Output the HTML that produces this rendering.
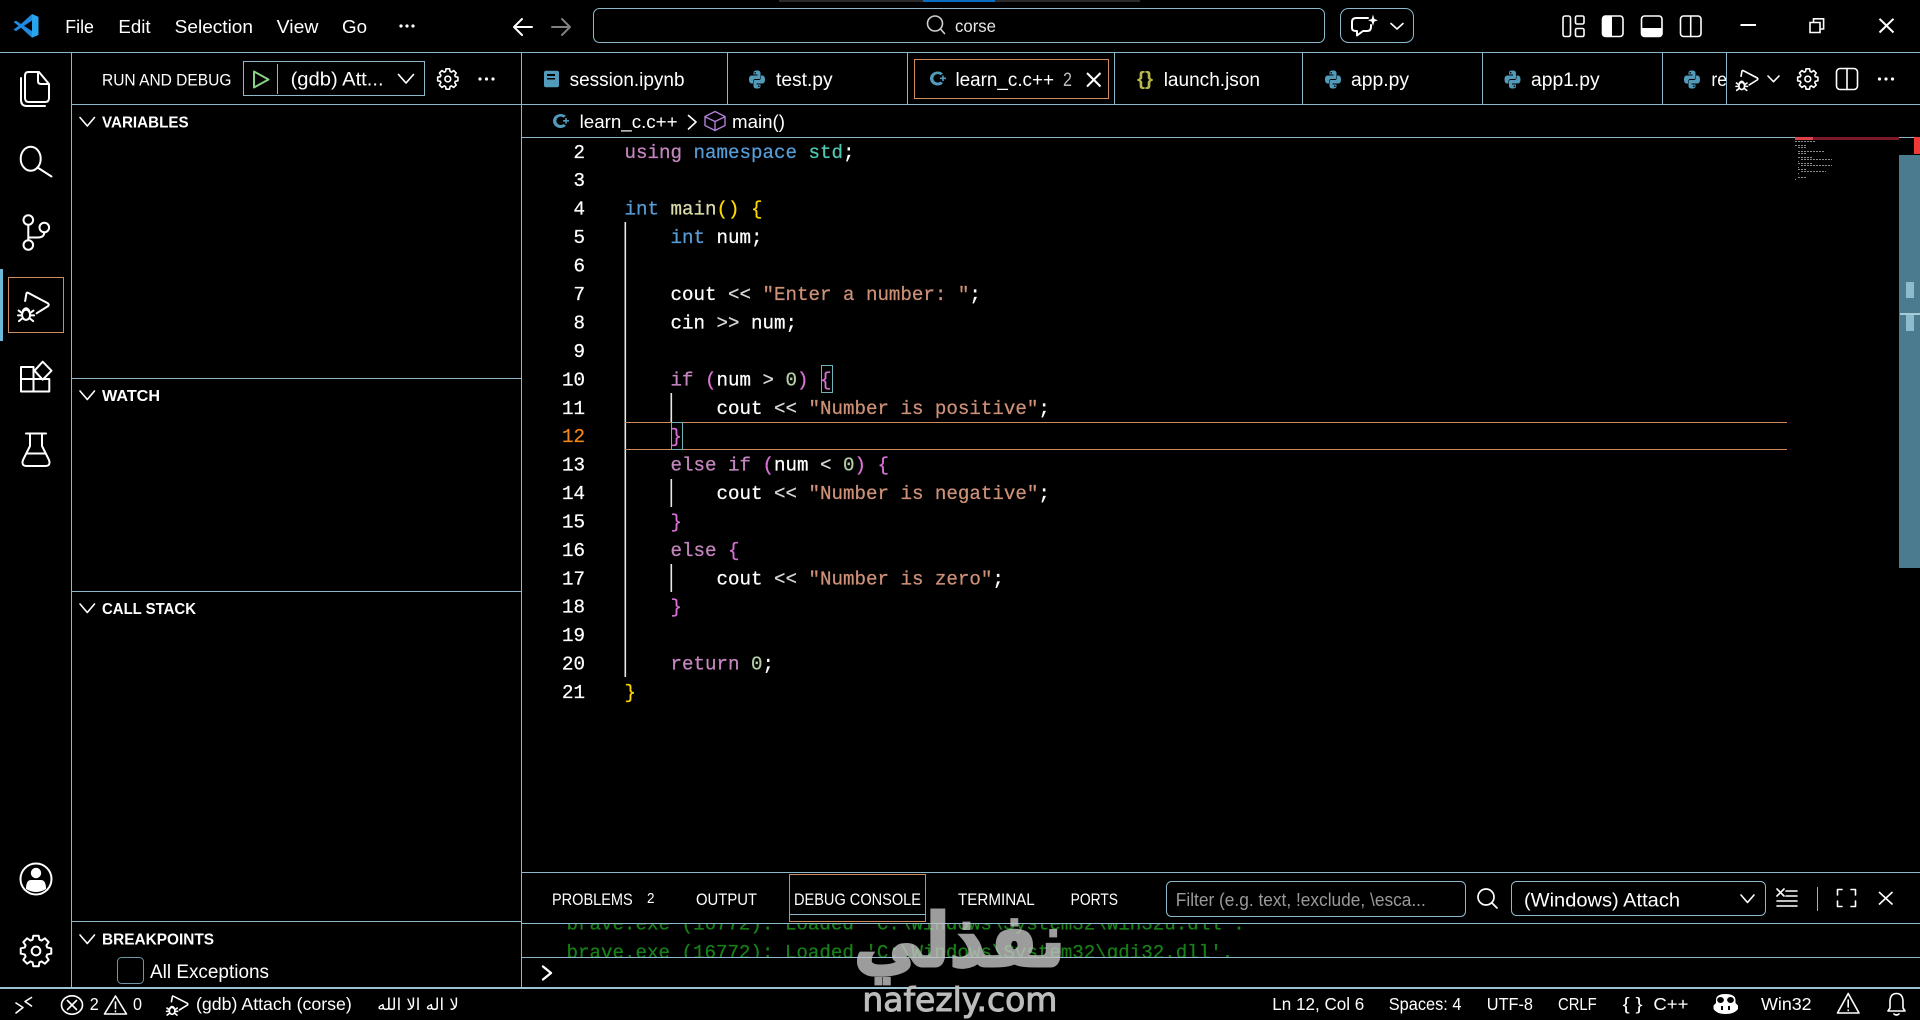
<!DOCTYPE html>
<html lang="en">
<head>
<meta charset="utf-8">
<title>learn_c.c++ - corse</title>
<style>
html,body{margin:0;padding:0;background:#000;width:1920px;height:1020px;overflow:hidden}
svg{display:block}
text{font-family:"Liberation Sans","DejaVu Sans",sans-serif;fill:#fff;white-space:pre}
.code text,text.code{font-family:"Liberation Mono",monospace;font-size:19.17px;white-space:pre;stroke:#fff;stroke-width:.25}
.k{fill:#c586c0;stroke:#c586c0}.b{fill:#569cd6;stroke:#569cd6}.t{fill:#4ec9b0;stroke:#4ec9b0}.y{fill:#dcdcaa;stroke:#dcdcaa}.g{fill:#ffd700;stroke:#ffd700}.s{fill:#ce9178;stroke:#ce9178}.n{fill:#b5cea8;stroke:#b5cea8}.p{fill:#da70d6;stroke:#da70d6}.w{fill:#fff}.o{fill:#d8d8d8;stroke:#d8d8d8}
.code text.p{fill:#da70d6;stroke:#da70d6}.code text.g{fill:#ffd700;stroke:#ffd700}
.ln{font-family:"Liberation Mono",monospace;font-size:19.17px;text-anchor:end;stroke:#fff;stroke-width:.25}
.i{fill:none;stroke:#fff;stroke-width:2;stroke-linecap:round;stroke-linejoin:round}
.i1{fill:none;stroke:#fff;stroke-width:1.6;stroke-linecap:round;stroke-linejoin:round}
.ns{vector-effect:non-scaling-stroke}
.ln1{fill:#8db9cc}
</style>
</head>
<body>
<svg width="1920" height="1020" viewBox="0 0 1920 1020" xmlns="http://www.w3.org/2000/svg">
<defs>
<path id="gear" class="ns" d="M72.7 -22.2 L98.5 -17.4 98.5 17.4 72.7 22.2 67.1 35.7 81.9 57.3 57.3 81.9 35.7 67.1 22.2 72.7 17.4 98.5 -17.4 98.5 -22.2 72.7 -35.7 67.1 -57.3 81.9 -81.9 57.3 -67.1 35.7 -72.7 22.2 -98.5 17.4 -98.5 -17.4 -72.7 -22.2 -67.1 -35.7 -81.9 -57.3 -57.3 -81.9 -35.7 -67.1 -22.2 -72.7 -17.4 -98.5 17.4 -98.5 22.2 -72.7 35.7 -67.1 57.3 -81.9 81.9 -57.3 67.1 -35.7Z M28 0 A28 28 0 1 0 -28 0 A28 28 0 1 0 28 0Z"/>
<g id="dbg">
<path class="ns" d="M23 30 L27 6 Q28 0 33 3 L97 38 Q101 43 97 47 L60 71"/>
<ellipse class="ns" cx="26" cy="76" rx="13" ry="17"/>
<path class="ns" d="M16 62 Q26 46 36 62 M13 70 L2 62 M13 78 H0 M14 88 L3 97 M39 70 L50 62 M39 78 H52 M38 88 L49 97"/>
</g>
<g id="py">
<path d="M8 0 C5 0 4.5 1 4.5 2.5 V4 H8.5 V5 H2.5 C1 5 0 6.5 0 9 C0 11.5 1 13 2.5 13 H4 V11 C4 9.5 5 8.5 6.5 8.5 H10 C11 8.5 11.5 8 11.5 7 V2.5 C11.5 1 10.5 0 8 0Z"/>
<path transform="rotate(180 8 9)" d="M8 0 C5 0 4.5 1 4.5 2.5 V4 H8.5 V5 H2.5 C1 5 0 6.5 0 9 C0 11.5 1 13 2.5 13 H4 V11 C4 9.5 5 8.5 6.5 8.5 H10 C11 8.5 11.5 8 11.5 7 V2.5 C11.5 1 10.5 0 8 0Z"/>
<circle cx="6.2" cy="2.2" r=".8" fill="#000"/>
<circle cx="9.8" cy="15.8" r=".8" fill="#000"/>
</g>
<g id="cpp">
<path d="M7.5 0 A7.5 7 0 1 0 13 11.7 L10.6 10 A4.4 4.2 0 1 1 10.6 3.6 L13 2 A7.5 7 0 0 0 7.5 0Z" fill="#519aba"/>
<path d="M10 6 H16 V7.6 H10Z M12.2 4 H13.8 V9.6 H12.2Z" fill="#519aba"/>
</g>
<clipPath id="con"><rect x="522" y="924" width="1398" height="33"/></clipPath>
<clipPath id="retab"><rect x="1680" y="53" width="46" height="51"/></clipPath>
</defs>

<!-- top sliver -->
<rect x="779" y="0" width="361" height="2" fill="#2b2b2b"/>
<rect x="923" y="0" width="72" height="2" fill="#0a6cc0"/>

<!-- structure lines -->
<g class="ln1" shape-rendering="crispEdges">
<rect x="0" y="52" width="1920" height="1"/>
<rect x="71" y="52" width="1" height="936"/>
<rect x="521" y="52" width="1" height="936"/>
<rect x="71" y="104" width="1849" height="1"/>
<rect x="521" y="137" width="1399" height="1"/>
<rect x="71" y="378" width="450" height="1"/>
<rect x="71" y="591" width="450" height="1"/>
<rect x="71" y="921" width="450" height="1"/>
<rect x="522" y="872" width="1398" height="1"/>
<rect x="522" y="923" width="1398" height="1"/>
<rect x="522" y="957" width="1398" height="1"/>
<rect x="0" y="987" width="1920" height="2" fill="#9cc4d4"/>
<rect x="727" y="53" width="1" height="51"/>
<rect x="907" y="53" width="1" height="51"/>
<rect x="1114" y="53" width="1" height="51"/>
<rect x="1302" y="53" width="1" height="51"/>
<rect x="1482" y="53" width="1" height="51"/>
<rect x="1662" y="53" width="1" height="51"/>
<rect x="1726" y="53" width="1" height="51"/>
</g>

<!-- title bar -->
<g transform="translate(13.5 14) scale(.25 .237)">
<path d="M74 0 L30 42 L10 28 L0 34 L20 50 L0 66 L10 72 L30 58 L74 100 V72 L42 50 L74 28Z" fill="#1f8ae0"/>
<path d="M74 0 L100 12 V88 L74 100Z" fill="#29a5ef"/>
</g>
<g font-size="18.5">
<text x="65.3" y="33" textLength="28.6" lengthAdjust="spacingAndGlyphs">File</text>
<text x="118.4" y="33" textLength="32.2" lengthAdjust="spacingAndGlyphs">Edit</text>
<text x="174.7" y="33" textLength="78.3" lengthAdjust="spacingAndGlyphs">Selection</text>
<text x="276.7" y="33" textLength="41.7" lengthAdjust="spacingAndGlyphs">View</text>
<text x="342" y="33" textLength="25" lengthAdjust="spacingAndGlyphs">Go</text>
</g>
<g fill="#fff"><circle cx="401" cy="26" r="1.6"/><circle cx="407" cy="26" r="1.6"/><circle cx="413" cy="26" r="1.6"/></g>
<path class="i" d="M532 27 H514 M522 19 L514 27 L522 35"/>
<path class="i" d="M552 27 H570 M562 19 L570 27 L562 35" style="stroke:#808080"/>
<rect x="593.5" y="8.5" width="731" height="34" rx="6" fill="none" stroke="#8db9cc"/>
<ellipse class="i1" cx="935" cy="23.5" rx="7.5" ry="7.5" style="stroke:#d0d0d0"/>
<path class="i1" d="M940.5 29 L944.5 33.5" style="stroke:#d0d0d0"/>
<text x="955" y="32" font-size="17.5" textLength="41" lengthAdjust="spacingAndGlyphs" style="fill:#e6e6e6">corse</text>
<rect x="1340.5" y="8.5" width="73" height="34" rx="8" fill="none" stroke="#8db9cc"/>
<path class="i" d="M1368 18 H1356 Q1352 18 1352 22 V28 Q1352 31 1356 31 H1357 V35.5 L1363 31 H1367 Q1371 31 1371 27 V25"/>
<path d="M1373 14.5 L1374.3 19 L1378 20.3 L1374.3 21.6 L1373 26 L1371.7 21.6 L1368 20.3 L1371.7 19Z" fill="#fff"/>
<path class="i1" d="M1391 23.5 L1397 29 L1403 23.5"/>

<rect x="1563" y="16" width="7.5" height="20.5" rx="2" class="i1"/>
<rect x="1575.5" y="16" width="8.5" height="8" rx="1.5" class="i1"/>
<rect x="1575.5" y="28.5" width="8.5" height="8" rx="1.5" class="i1"/>
<rect x="1602.5" y="16" width="20.5" height="20.5" rx="3" class="i1"/>
<path d="M1605 16 H1612 V36.5 H1605 Q1602.5 36.5 1602.5 34 V18.5 Q1602.5 16 1605 16Z" fill="#fff"/>
<rect x="1641.5" y="16" width="20.5" height="20.5" rx="3" class="i1"/>
<path d="M1641.5 28 H1662 V34 Q1662 36.5 1659.5 36.5 H1644 Q1641.5 36.5 1641.5 34Z" fill="#fff"/>
<rect x="1680.5" y="16" width="20.5" height="20.5" rx="3" class="i1"/>
<path class="i1" d="M1690.7 16 V36.5"/>

<rect x="1740.5" y="24" width="15.5" height="2" fill="#fff"/>
<path class="i1" d="M1810 22.5 H1820 V32.5 H1810Z M1813.5 22 V18.8 H1823.6 V29 H1820.5" style="stroke-linecap:butt;stroke-linejoin:miter"/>
<path class="i" d="M1879.5 18.8 L1893.5 32.5 M1893.5 18.8 L1879.5 32.5" style="stroke-linecap:butt"/>

<!-- activity bar -->
<path class="i" d="M28 72 H39 L49 84 V98 Q49 102 45 102 H29 Q25 102 25 98 V76 Q25 72 28 72Z M38 72 V81 Q38 84 41 84 H49 M21 78 V100 Q21 106 27 106 H45"/>
<ellipse class="i" cx="30.7" cy="158.7" rx="10" ry="12"/>
<path class="i" d="M37.5 167.5 L51.5 176.5"/>
<circle class="i" cx="28.3" cy="220" r="4.8"/>
<circle class="i" cx="44.3" cy="227.5" r="4.8"/>
<circle class="i" cx="28.3" cy="245" r="4.8"/>
<path class="i" d="M28.3 225 V240 M44.3 232.5 Q44 237.5 38 237.5 H28.3"/>
<rect x="0" y="269" width="3" height="72" fill="#6cb8d8"/>
<rect x="8.5" y="277.5" width="55" height="55" fill="none" stroke="#d08c5c"/>
<g class="i" transform="translate(18 292) scale(.31 .3)"><use href="#dbg"/></g>
<path class="i" d="M33.5 367 H21 V391.5 H49.3 V379 M33.5 367 V391.5 M21 379 H49.3"/>
<path class="i" d="M42.7 361.7 L51.5 370.7 L42.7 379.7 L34.5 370.7Z"/>
<path class="i" d="M26 433.5 H46 M30 433.5 V446 L23 460 Q21 466 27 466 H45 Q51 466 49 460 L42 446 V433.5 M27.5 453.5 H44.5"/>
<ellipse class="i" cx="36" cy="879" rx="15.5" ry="15.5"/>
<circle cx="36" cy="873" r="5.2" fill="#fff"/>
<path d="M26 889 Q26 880 31 880 H41 Q46 880 46 889 Q41 892 36 892 Q31 892 26 889Z" fill="#fff"/>
<g class="i" transform="translate(36 951) scale(.155 .155)"><use href="#gear"/></g>

<!-- sidebar header -->
<text x="102" y="85.5" font-size="16.5" textLength="129.4" lengthAdjust="spacingAndGlyphs">RUN AND DEBUG</text>
<rect x="243.5" y="61.5" width="181" height="34" fill="none" stroke="#8db9cc"/>
<path d="M254 71.5 L268.5 79.5 L254 87.5Z" fill="none" stroke="#89d185" stroke-width="2" stroke-linejoin="round"/>
<rect x="277" y="64" width="1" height="30" fill="#8db9cc"/>
<text x="290.6" y="85.5" font-size="19" textLength="93" lengthAdjust="spacingAndGlyphs">(gdb) Att...</text>
<path class="i" d="M398.5 74.5 L406 83 L413.5 74.5" style="stroke-width:1.7"/>
<g class="i1" transform="translate(447.8 79) scale(.103 .103)"><use href="#gear"/></g>
<g fill="#fff"><circle cx="480" cy="79" r="1.6"/><circle cx="486.5" cy="79" r="1.6"/><circle cx="493" cy="79" r="1.6"/></g>

<!-- sidebar sections -->
<g class="i1" style="stroke-width:1.6">
<path d="M80 117.5 L87.3 126 L94.5 117.5"/>
<path d="M80 391 L87.3 399.5 L94.5 391"/>
<path d="M80 604 L87.3 612.5 L94.5 604"/>
<path d="M80 935 L87.3 943.5 L94.5 935"/>
</g>
<g font-size="16" font-weight="bold" style="font-weight:bold">
<text x="102" y="127.5" font-weight="bold" textLength="86.6" lengthAdjust="spacingAndGlyphs">VARIABLES</text>
<text x="102" y="401" font-weight="bold" textLength="58" lengthAdjust="spacingAndGlyphs">WATCH</text>
<text x="102" y="614" font-weight="bold" textLength="94" lengthAdjust="spacingAndGlyphs">CALL STACK</text>
<text x="102" y="944.5" font-weight="bold" textLength="112" lengthAdjust="spacingAndGlyphs">BREAKPOINTS</text>
</g>
<rect x="117.5" y="957.5" width="26" height="26" rx="4" fill="none" stroke="#6d97a8"/>
<text x="150" y="978" font-size="19" textLength="119" lengthAdjust="spacingAndGlyphs">All Exceptions</text>

<!-- tabs -->
<g font-size="19">
<text x="569.6" y="86" textLength="114.9" lengthAdjust="spacingAndGlyphs">session.ipynb</text>
<text x="776" y="86" textLength="56.6" lengthAdjust="spacingAndGlyphs">test.py</text>
<text x="955.5" y="86" textLength="98.5" lengthAdjust="spacingAndGlyphs">learn_c.c++</text>
<text x="1063" y="86" textLength="9" lengthAdjust="spacingAndGlyphs" style="fill:#bdbdbd">2</text>
<text x="1163.7" y="86" textLength="96.3" lengthAdjust="spacingAndGlyphs">launch.json</text>
<text x="1351" y="86" textLength="58" lengthAdjust="spacingAndGlyphs">app.py</text>
<text x="1531" y="86" textLength="68.6" lengthAdjust="spacingAndGlyphs">app1.py</text>
<g clip-path="url(#retab)"><text x="1711.4" y="86" textLength="15.6" lengthAdjust="spacingAndGlyphs">re</text></g>
</g>
<rect x="914.5" y="59.5" width="194" height="39" fill="none" stroke="#d08c5c"/>
<path class="i" d="M1087 73 L1100.5 86.5 M1100.5 73 L1087 86.5" style="stroke-linecap:butt"/>
<!-- notebook icon -->
<path d="M546 70.7 H557 Q559 70.7 559 72.7 V85.3 Q559 87.3 557 87.3 H546 Q544 87.3 544 85.3 V72.7 Q544 70.7 546 70.7Z" fill="#519aba"/>
<rect x="547" y="74" width="8" height="2" fill="#000"/><rect x="547" y="78" width="8" height="1.5" fill="#000"/>
<g fill="#519aba">
<use href="#py" transform="translate(749 70.5)"/>
<use href="#py" transform="translate(1325 70.5)"/>
<use href="#py" transform="translate(1504.5 70.5)"/>
<use href="#py" transform="translate(1684 70.5)"/>
</g>
<use href="#cpp" transform="translate(930 71.5)"/>
<text x="1137" y="85" font-size="19" font-weight="bold" textLength="16" lengthAdjust="spacingAndGlyphs" style="fill:#b8b84a">{}</text>

<!-- editor toolbar -->
<g class="i1" transform="translate(1736 70) scale(.22 .21)"><use href="#dbg"/></g>
<path class="i1" d="M1768 76 L1773.5 81.7 L1779 76"/>
<g class="i1" transform="translate(1807.8 79) scale(.103 .103)"><use href="#gear"/></g>
<rect x="1836.5" y="68.5" width="21" height="21" rx="3.5" class="i1"/>
<path class="i1" d="M1847 68.5 V89.5"/>
<g fill="#fff"><circle cx="1879.5" cy="79" r="1.6"/><circle cx="1886" cy="79" r="1.6"/><circle cx="1892.5" cy="79" r="1.6"/></g>

<!-- breadcrumbs -->
<use href="#cpp" transform="translate(553 114)"/>
<g font-size="18.5" style="fill:#e8e8e8">
<text x="579.6" y="128" textLength="98" lengthAdjust="spacingAndGlyphs">learn_c.c++</text>
<text x="732" y="128" textLength="53" lengthAdjust="spacingAndGlyphs">main()</text>
</g>
<path class="i1" d="M688.5 115.5 L696 122 L688.5 129"/>
<path d="M715 111.5 L725 116.5 V125.5 L715 130.5 L705 125.5 V116.5Z M705.5 117 L715 121.5 L724.5 117 M715 121.5 V130" fill="none" stroke="#b180d7" stroke-width="1.4" stroke-linejoin="round"/>

<!-- code -->
<rect x="624.5" y="222" width="1.6" height="455" fill="#e8e8e8"/>
<rect x="670.5" y="393" width="1.6" height="29" fill="#e8e8e8"/>
<rect x="670.5" y="479" width="1.6" height="28" fill="#e8e8e8"/>
<rect x="670.5" y="564" width="1.6" height="28" fill="#e8e8e8"/>
<rect x="625" y="422" width="1162" height="1" fill="#d08c5c"/>
<rect x="625" y="449" width="1162" height="1" fill="#d08c5c"/>
<rect x="821.5" y="365.5" width="11" height="27" fill="none" stroke="#6fb3b8"/>
<rect x="671.5" y="422.5" width="11" height="27" fill="none" stroke="#6fb3b8"/>

<g class="ln">
<text class="ln" x="585" y="158">2</text>
<text class="ln" x="585" y="186">3</text>
<text class="ln" x="585" y="214.5">4</text>
<text class="ln" x="585" y="243">5</text>
<text class="ln" x="585" y="271.7">6</text>
<text class="ln" x="585" y="300">7</text>
<text class="ln" x="585" y="328.5">8</text>
<text class="ln" x="585" y="356.9">9</text>
<text class="ln" x="585" y="385.4">10</text>
<text class="ln" x="585" y="413.8">11</text>
<text class="ln" x="585" y="442.2" style="fill:#f38518;stroke:#f38518">12</text>
<text class="ln" x="585" y="470.6">13</text>
<text class="ln" x="585" y="499">14</text>
<text class="ln" x="585" y="527.5">15</text>
<text class="ln" x="585" y="555.9">16</text>
<text class="ln" x="585" y="584.3">17</text>
<text class="ln" x="585" y="612.7">18</text>
<text class="ln" x="585" y="641.1">19</text>
<text class="ln" x="585" y="669.6">20</text>
<text class="ln" x="585" y="698">21</text>
</g>
<g class="code">
<text x="624.5" y="158"><tspan class="k">using</tspan> <tspan class="b">namespace</tspan> <tspan class="t">std</tspan>;</text>
<text x="624.5" y="214.5"><tspan class="b">int</tspan> <tspan class="y">main</tspan><tspan class="g">()</tspan> <tspan class="g">{</tspan></text>
<text x="670.5" y="243"><tspan class="b">int</tspan> num;</text>
<text x="670.5" y="300">cout <tspan class="o">&lt;&lt;</tspan> <tspan class="s">"Enter a number: "</tspan>;</text>
<text x="670.5" y="328.5">cin <tspan class="o">&gt;&gt;</tspan> num;</text>
<text x="670.5" y="385.4"><tspan class="k">if</tspan> <tspan class="p">(</tspan>num <tspan class="o">&gt;</tspan> <tspan class="n">0</tspan><tspan class="p">)</tspan> <tspan class="p">{</tspan></text>
<text x="716.5" y="413.8">cout <tspan class="o">&lt;&lt;</tspan> <tspan class="s">"Number is positive"</tspan>;</text>
<text x="670.5" y="442.2" class="p">}</text>
<text x="670.5" y="470.6"><tspan class="k">else if</tspan> <tspan class="p">(</tspan>num <tspan class="o">&lt;</tspan> <tspan class="n">0</tspan><tspan class="p">)</tspan> <tspan class="p">{</tspan></text>
<text x="716.5" y="499">cout <tspan class="o">&lt;&lt;</tspan> <tspan class="s">"Number is negative"</tspan>;</text>
<text x="670.5" y="527.5" class="p">}</text>
<text x="670.5" y="555.9"><tspan class="k">else</tspan> <tspan class="p">{</tspan></text>
<text x="716.5" y="584.3">cout <tspan class="o">&lt;&lt;</tspan> <tspan class="s">"Number is zero"</tspan>;</text>
<text x="670.5" y="612.7" class="p">}</text>
<text x="670.5" y="669.6"><tspan class="k">return</tspan> <tspan class="n">0</tspan>;</text>
<text x="624.5" y="698" class="g">}</text>
</g>

<!-- minimap -->
<rect x="1795" y="137" width="104" height="3" fill="#7d1a2a"/>
<rect x="1795" y="137" width="18" height="3" fill="#e0404a"/>
<path d="M1795 141.5 H1815 M1795 145.5 H1807 M1798 147.5 H1806 M1798 151.5 H1825 M1798 153.5 H1806 M1798 157.5 H1812 M1801 159.5 H1832 M1798 161.5 H1799 M1798 163.5 H1812 M1801 165.5 H1832 M1798 167.5 H1799 M1798 169.5 H1806 M1801 171.5 H1826 M1798 173.5 H1799 M1798 177.5 H1806 M1795 179.5 H1796" stroke="#8a8a8a" stroke-width="1" stroke-dasharray="2 1" fill="none"/>

<!-- scrollbar -->
<rect x="1899" y="155" width="21" height="413" fill="#4b7b8e"/>
<rect x="1914" y="137" width="6" height="17" fill="#f03a3a"/>
<rect x="1906" y="282" width="8" height="16" fill="#8fbccc"/>
<rect x="1906" y="315" width="8" height="16" fill="#8fbccc"/>
<rect x="1900" y="313" width="20" height="2" fill="#a8cbd8"/>

<!-- panel -->
<g font-size="16.7">
<text x="552" y="905" textLength="80.7" lengthAdjust="spacingAndGlyphs">PROBLEMS</text>
<text x="696" y="905" textLength="61" lengthAdjust="spacingAndGlyphs">OUTPUT</text>
<text x="794" y="905" textLength="127" lengthAdjust="spacingAndGlyphs">DEBUG CONSOLE</text>
<text x="958" y="905" textLength="76.7" lengthAdjust="spacingAndGlyphs">TERMINAL</text>
<text x="1070.6" y="905" textLength="47.4" lengthAdjust="spacingAndGlyphs">PORTS</text>
</g>
<text x="647" y="903" font-size="15" textLength="7.5" lengthAdjust="spacingAndGlyphs">2</text>
<rect x="789.5" y="874.5" width="136" height="47" fill="none" stroke="#d08c5c"/>
<rect x="790" y="914" width="135" height="1" fill="#8db9cc"/>

<g clip-path="url(#con)">
<text class="code" x="566.5" y="929.5" style="fill:#178017;stroke:#178017">brave.exe (16772): Loaded 'C:\Windows\System32\win32u.dll'.</text>
<text class="code" x="566.5" y="958" style="fill:#178017;stroke:#178017">brave.exe (16772): Loaded 'C:\Windows\System32\gdi32.dll'.</text>
</g>
<path class="i" d="M543 966.5 L551 973 L543 979.5" style="stroke-width:2.4"/>

<rect x="1166.5" y="881.5" width="299" height="35" rx="5" fill="none" stroke="#8db9cc"/>
<text x="1175.8" y="906" font-size="18" textLength="250" lengthAdjust="spacingAndGlyphs" style="fill:#9a9a9a">Filter (e.g. text, !exclude, \esca...</text>
<ellipse class="i" cx="1486" cy="897" rx="8" ry="8" style="stroke-width:1.7"/>
<path class="i" d="M1492 903 L1497 908" style="stroke-width:1.7"/>
<rect x="1511.5" y="881.5" width="254" height="34" rx="5" fill="none" stroke="#8db9cc"/>
<text x="1524" y="906.5" font-size="19" textLength="156" lengthAdjust="spacingAndGlyphs">(Windows) Attach</text>
<path class="i1" d="M1741 895 L1747.5 902.5 L1754 895"/>
<path class="i1" d="M1777 889 L1784 896 M1784 889 L1777 896 M1786 891 H1797 M1786 896 H1797 M1777 901 H1797 M1777 906 H1797"/>
<rect x="1817" y="887" width="1" height="24" fill="#8db9cc"/>
<path class="i1" d="M1837.5 895 V889.5 H1842 M1851 889.5 H1855.5 V895 M1855.5 901 V906.5 H1851 M1842 906.5 H1837.5 V901"/>
<path class="i1" d="M1879 892 L1892.5 904.5 M1892.5 892 L1879 904.5" style="stroke-linecap:butt"/>

<!-- watermark -->
<g style="opacity:.8">
<text x="1065" y="966" font-size="74" font-weight="bold" textLength="211" lengthAdjust="spacingAndGlyphs" direction="rtl" style="fill:#c4c4c4;stroke:#c4c4c4;stroke-width:3;font-family:'DejaVu Sans',sans-serif">نفذلي</text>
</g>
<text x="862.4" y="1011" font-size="33" textLength="195" lengthAdjust="spacingAndGlyphs" style="fill:#bcbcbc;stroke:#bcbcbc;stroke-width:1;font-family:'DejaVu Sans',sans-serif">nafezly.com</text>

<!-- status bar -->
<path class="i" d="M16 1003 L23 1007.5 L16 1013 M31.5 997.5 L25 1001.5 L31.5 1006" style="stroke-width:1.6"/>
<ellipse class="i1" cx="72" cy="1005" rx="10.5" ry="9.2"/>
<path class="i1" d="M67.5 1000.5 L76.5 1009.5 M76.5 1000.5 L67.5 1009.5"/>
<path class="i1" d="M115.5 996 L126.5 1014 H104.5Z M115.5 1002 V1008.5 M115.5 1011 V1011.6"/>
<g font-size="17.5">
<text x="89.8" y="1010" textLength="9" lengthAdjust="spacingAndGlyphs">2</text>
<text x="133" y="1010" textLength="9" lengthAdjust="spacingAndGlyphs">0</text>
<text x="196" y="1010" textLength="155.8" lengthAdjust="spacingAndGlyphs">(gdb) Attach (corse)</text>
<text x="1272.3" y="1010" textLength="92" lengthAdjust="spacingAndGlyphs">Ln 12, Col 6</text>
<text x="1388.8" y="1010" textLength="72.6" lengthAdjust="spacingAndGlyphs">Spaces: 4</text>
<text x="1486.8" y="1010" textLength="46.2" lengthAdjust="spacingAndGlyphs">UTF-8</text>
<text x="1558" y="1010" textLength="38.7" lengthAdjust="spacingAndGlyphs">CRLF</text>
<text x="1622.6" y="1010" textLength="20" lengthAdjust="spacingAndGlyphs">{ }</text>
<text x="1653.4" y="1010" textLength="35" lengthAdjust="spacingAndGlyphs">C++</text>
<text x="1761" y="1010" textLength="50.6" lengthAdjust="spacingAndGlyphs">Win32</text>
</g>
<text x="418" y="1010" font-size="16.5" text-anchor="middle" direction="rtl" style="font-family:'DejaVu Sans',sans-serif">لا اله الا الله</text>
<g class="i1" transform="translate(166.5 995.7) scale(.215 .2)"><use href="#dbg"/></g>

<path d="M1725.5 994 C1720 994 1716 995.5 1716 1000 V1003 L1713.5 1005.5 V1009 C1716 1012.5 1720 1014 1725.5 1014 C1731 1014 1735.5 1012.5 1738 1009 V1005.5 L1735.5 1003 V1000 C1735.5 995.5 1731 994 1725.5 994Z" fill="#fff"/>
<ellipse cx="1720.5" cy="1000" rx="3.4" ry="3" fill="#000"/>
<ellipse cx="1730.5" cy="1000" rx="3.4" ry="3" fill="#000"/>
<rect x="1721" y="1006" width="2" height="4" fill="#000"/>
<rect x="1728" y="1006" width="2" height="4" fill="#000"/>
<path class="i1" d="M1848.2 993.5 L1859 1013 H1837.5Z M1848.2 1000 V1007 M1848.2 1010 V1010.5"/>
<path class="i1" d="M1896.5 993.5 C1891.5 993.5 1890 997.5 1890 1002 V1008 L1888 1011 H1905 L1903 1008 V1002 C1903 997.5 1901.5 993.5 1896.5 993.5Z M1894 1014 Q1896.5 1016 1899 1014"/>
</svg>
</body>
</html>
